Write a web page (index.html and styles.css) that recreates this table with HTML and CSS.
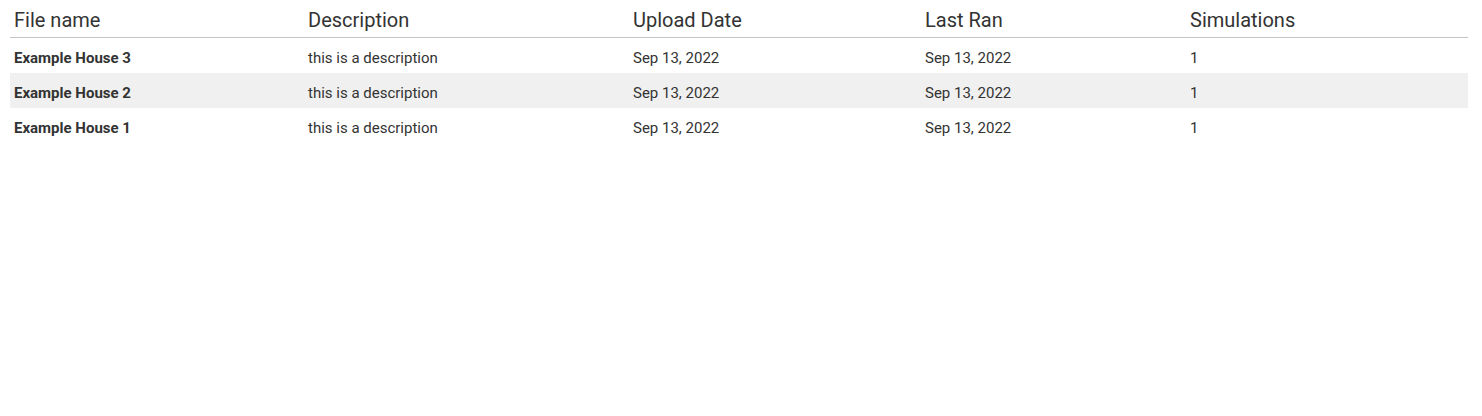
FILE: index.html
```html
<!DOCTYPE html>
<html>
<head>
<meta charset="utf-8">
<link rel="stylesheet" href="styles.css">
</head>
<body>
<div class="wrap">
<table class="files">
<colgroup>
<col class="c1"><col class="c2"><col class="c3"><col class="c4"><col class="c5">
</colgroup>
<thead>
<tr><th>File name</th><th>Description</th><th>Upload Date</th><th>Last Ran</th><th>Simulations</th></tr>
</thead>
<tbody>
<tr><td class="name">Example House 3</td><td>this is a description</td><td>Sep 13, 2022</td><td>Sep 13, 2022</td><td>1</td></tr>
<tr><td class="name">Example House 2</td><td>this is a description</td><td>Sep 13, 2022</td><td>Sep 13, 2022</td><td>1</td></tr>
<tr><td class="name">Example House 1</td><td>this is a description</td><td>Sep 13, 2022</td><td>Sep 13, 2022</td><td>1</td></tr>
</tbody>
</table>
</div>
</body>
</html>
```
FILE: styles.css
```css
html, body { margin: 0; padding: 0; background: #fff; }
body { font-family: Roboto, "Noto Sans", sans-serif; color: #333; }
.wrap { padding: 0 14px 0 10px; }
.files { width: 1458px; border-collapse: separate; border-spacing: 0; table-layout: fixed; }
.c1 { width: 294px; }
.c2 { width: 325px; }
.c3 { width: 292px; }
.c4 { width: 265px; }
.c5 { width: 282px; }
.files th {
  text-align: left; font-weight: 400; font-size: 20px; line-height: 24px; color: #333;
  height: 38px; padding: 3px 4px 0; box-sizing: border-box;
  border-bottom: 1px solid #c4c4c4; vertical-align: middle;
}
.files td {
  font-size: 15px; line-height: 18px; height: 35px; padding: 5px 4px 0; box-sizing: border-box;
  vertical-align: middle;
}
.files td.name { font-weight: 700; }
.files tbody tr:nth-child(even) td { background: #f0f0f0; }
```
